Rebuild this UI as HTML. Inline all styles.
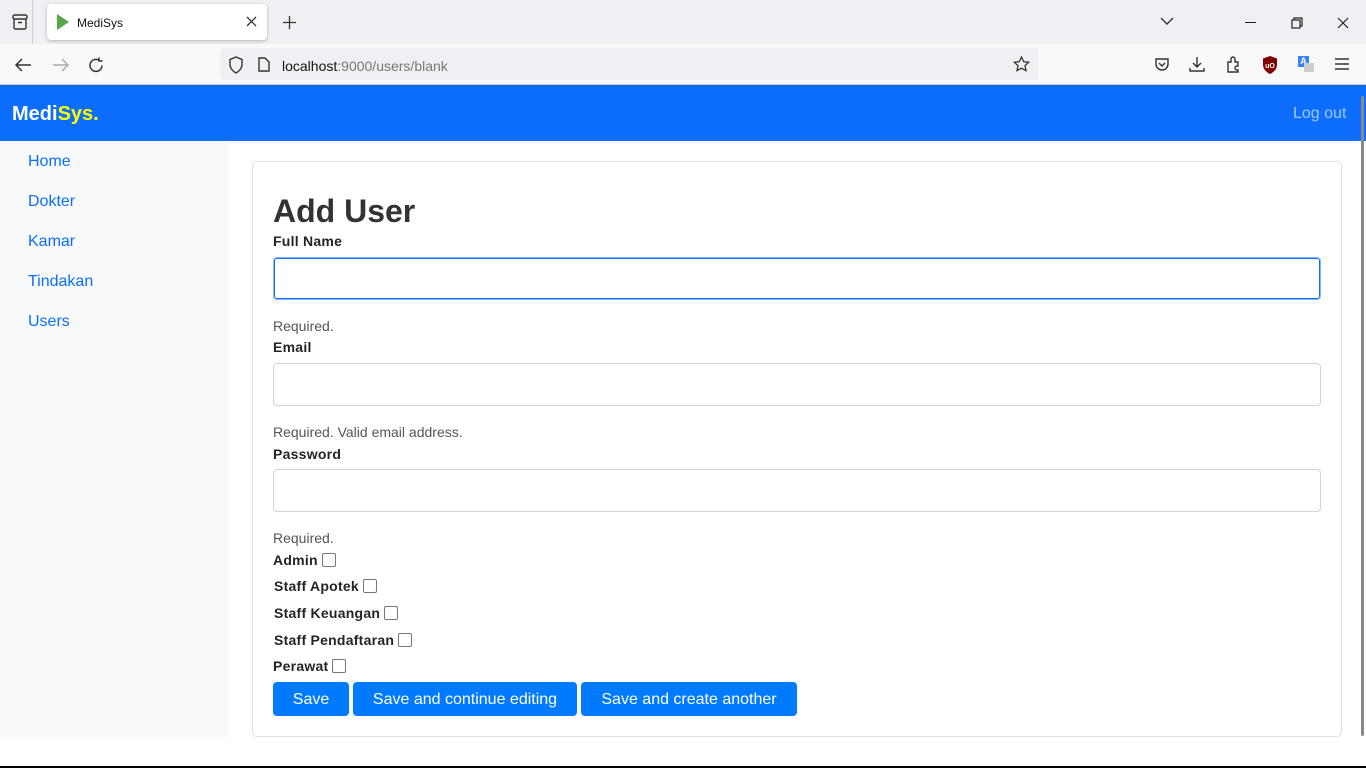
<!DOCTYPE html>
<html><head><meta charset="utf-8"><style>
*{box-sizing:border-box;margin:0;padding:0}
body{width:1366px;height:768px;position:relative;overflow:hidden;background:#fff;font-family:"Liberation Sans",Arial,sans-serif;color:#212529}
.a{position:absolute}
.lbl{position:absolute;left:273px;font-size:14px;font-weight:bold;color:#212529;letter-spacing:0.25px}
.help{position:absolute;left:273px;font-size:14px;color:#555}
.inp{position:absolute;left:273px;width:1048px;height:43px;border:1px solid #ced4da;border-radius:4px;background:#fff}
.cb{display:inline-block;width:14px;height:14px;border:1.5px solid #777;border-radius:2px;vertical-align:-2px;margin-left:4px;background:#fff}
.btn{position:absolute;top:682px;height:34px;background:#007bff;color:#fff;font-size:16px;border-radius:4px;text-align:center;line-height:36px}
.nav{position:absolute;left:28px;font-size:16px;color:#0d6efd}
</style></head><body>
<!-- tab bar -->
<div class="a" style="left:0;top:0;width:1366px;height:44px;background:#f0f0f4"></div>
<svg class="a" style="left:11px;top:13px" width="18" height="18" viewBox="0 0 18 18" fill="none" stroke="#333" stroke-width="1.4"><rect x="2" y="2" width="14" height="4" rx="1.5"/><path d="M3 6v8.5a1.5 1.5 0 0 0 1.5 1.5h9a1.5 1.5 0 0 0 1.5-1.5V6M7 9.5h4"/></svg>
<div class="a" style="left:32px;top:0;width:1px;height:44px;background:#ccc"></div>
<div class="a" style="left:47px;top:4px;width:220px;height:36px;background:#fff;border-radius:4px;box-shadow:0 1px 3px rgba(0,0,0,.25)"></div>
<svg class="a" style="left:57px;top:14px" width="12" height="16"><path d="M0 0L12 8L0 16Z" fill="#5aa64a"/></svg>
<div class="a" style="left:77px;top:16px;font-size:12px;color:#111">MediSys</div>
<svg class="a" style="left:246px;top:16px" width="11" height="11" stroke="#333" stroke-width="1.3"><path d="M1 1l9 9M10 1L1 10"/></svg>
<svg class="a" style="left:283px;top:16px" width="13" height="13" stroke="#333" stroke-width="1.3"><path d="M6.5 0v13M0 6.5h13"/></svg>
<svg class="a" style="left:1160px;top:16px" width="14" height="10"><path d="M1 2l6 6 6-6" stroke="#333" stroke-width="1.4" fill="none"/></svg>
<div class="a" style="left:1245px;top:22px;width:11px;height:1px;background:#222"></div>
<svg class="a" style="left:1291px;top:17px" width="12" height="12" fill="none" stroke="#222" stroke-width="1.2"><rect x="1" y="3" width="8" height="8"/><path d="M3 3V1h8v8H9"/></svg>
<svg class="a" style="left:1337px;top:17px" width="12" height="12" stroke="#222" stroke-width="1.2"><path d="M1 1l10 10M11 1L1 11"/></svg>
<!-- nav bar -->
<div class="a" style="left:0;top:44px;width:1366px;height:40px;background:#f9f9fb"></div>
<div class="a" style="left:0;top:84px;width:1366px;height:1px;background:#ccc"></div>
<svg class="a" style="left:14px;top:57px" width="18" height="16" stroke="#333" stroke-width="1.5" fill="none"><path d="M17 8H2M8 2L2 8l6 6"/></svg>
<svg class="a" style="left:52px;top:57px" width="18" height="16" stroke="#aaa" stroke-width="1.5" fill="none"><path d="M1 8h15M10 2l6 6-6 6"/></svg>
<svg class="a" style="left:88px;top:57px" width="17" height="17" stroke="#333" stroke-width="1.5" fill="none"><path d="M14 8.5A6 6 0 1 1 11.5 3.5M11 0.5v3.5h3.5"/></svg>
<div class="a" style="left:220px;top:48px;width:818px;height:32px;background:#f0f0f4;border-radius:4px"></div>
<svg class="a" style="left:228px;top:56px" width="16" height="18" fill="none" stroke="#333" stroke-width="1.4"><path d="M8 1L2 3.5v5C2 12 5 15.5 8 17c3-1.5 6-5 6-8.5v-5z"/></svg>
<svg class="a" style="left:258px;top:57px" width="12" height="15" fill="none" stroke="#333" stroke-width="1.4"><path d="M1 1h6l4 4v9H1z"/></svg>
<div class="a" style="left:282px;top:58px;font-size:14px;color:#111">localhost<span style="color:#777">:9000/users/blank</span></div>
<svg class="a" style="left:1013px;top:56px" width="17" height="17" fill="none" stroke="#333" stroke-width="1.3"><path d="M8.5 1l2.2 4.6 5 .6-3.7 3.4 1 5L8.5 12.2 4 14.6l1-5L1.3 6.2l5-.6z"/></svg>
<svg class="a" style="left:1154px;top:57px" width="16" height="16" fill="none" stroke="#333" stroke-width="1.4"><path d="M2 2h12v5a6 6 0 0 1-12 0z M5 6l3 3 3-3"/></svg>
<svg class="a" style="left:1189px;top:56px" width="16" height="17" fill="none" stroke="#333" stroke-width="1.4"><path d="M8 1v10M4 7l4 4 4-4M1 12v3h14v-3"/></svg>
<svg class="a" style="left:1226px;top:56px" width="16" height="17" fill="none" stroke="#333" stroke-width="1.4"><path d="M2 6h3V3a2 2 0 0 1 4 0v3h3v4h-1a2 2 0 0 0 0 4h1v2H2z"/></svg>
<svg class="a" style="left:1262px;top:56px" width="16" height="18"><path d="M8 0L1 2.5v6C1 13 4 16 8 18c4-2 7-5 7-9.5v-6z" fill="#800000"/><text x="8" y="12" font-size="7" fill="#fff" text-anchor="middle" font-family="Liberation Sans" font-weight="bold">uO</text></svg>
<div class="a" style="left:1298px;top:56px;width:11px;height:11px;background:#3b82f6;color:#fff;font-size:9px;font-weight:bold;text-align:center;line-height:11px">A</div>
<div class="a" style="left:1304px;top:63px;width:10px;height:9px;background:#ccc"></div>
<svg class="a" style="left:1335px;top:58px" width="14" height="12" stroke="#333" stroke-width="1.4"><path d="M0 1h14M0 6h14M0 11h14"/></svg>
<!-- header -->
<div class="a" style="left:0;top:85px;width:1366px;height:56px;background:#0d6efd"></div>
<div class="a" style="left:12px;top:103px;font-size:20px;font-weight:bold;color:#fff">Medi<span style="color:#ff0">Sys.</span></div>
<div class="a" style="left:1293px;top:105px;font-size:16px;color:rgba(255,255,255,.6)">Log out</div>
<div class="a" style="left:1361px;top:96px;width:3px;height:640px;background:#888;border-radius:2px"></div>
<!-- sidebar -->
<div class="a" style="left:0;top:141px;width:228px;height:596px;background:#f8f9fa"></div>
<div class="nav" style="top:153px">Home</div>
<div class="nav" style="top:193px">Dokter</div>
<div class="nav" style="top:233px">Kamar</div>
<div class="nav" style="top:273px">Tindakan</div>
<div class="nav" style="top:313px">Users</div>
<!-- card -->
<div class="a" style="left:252px;top:161px;width:1090px;height:576px;border:1px solid #dee2e6;border-radius:5px"></div>
<div class="a" style="left:273px;top:193px;font-size:32px;font-weight:bold;color:#333">Add User</div>
<div class="lbl" style="top:233px">Full Name</div>
<div class="inp" style="top:257px;border-color:#86b7fe;box-shadow:0 0 0 1px #0d6efd inset"></div>
<div class="help" style="top:318px">Required.</div>
<div class="lbl" style="top:339px">Email</div>
<div class="inp" style="top:363px"></div>
<div class="help" style="top:424px">Required. Valid email address.</div>
<div class="lbl" style="top:446px">Password</div>
<div class="inp" style="top:469px"></div>
<div class="help" style="top:530px">Required.</div>
<div class="lbl" style="top:552px">Admin<span class="cb"></span></div>
<div class="lbl" style="top:578px;left:274px">Staff Apotek<span class="cb"></span></div>
<div class="lbl" style="top:605px;left:274px">Staff Keuangan<span class="cb"></span></div>
<div class="lbl" style="top:632px;left:274px">Staff Pendaftaran<span class="cb"></span></div>
<div class="lbl" style="top:658px">Perawat<span class="cb"></span></div>
<div class="btn" style="left:273px;width:76px">Save</div>
<div class="btn" style="left:353px;width:224px">Save and continue editing</div>
<div class="btn" style="left:581px;width:216px">Save and create another</div>
<div class="a" style="left:0;top:766px;width:1366px;height:2px;background:#000"></div>
</body></html>
